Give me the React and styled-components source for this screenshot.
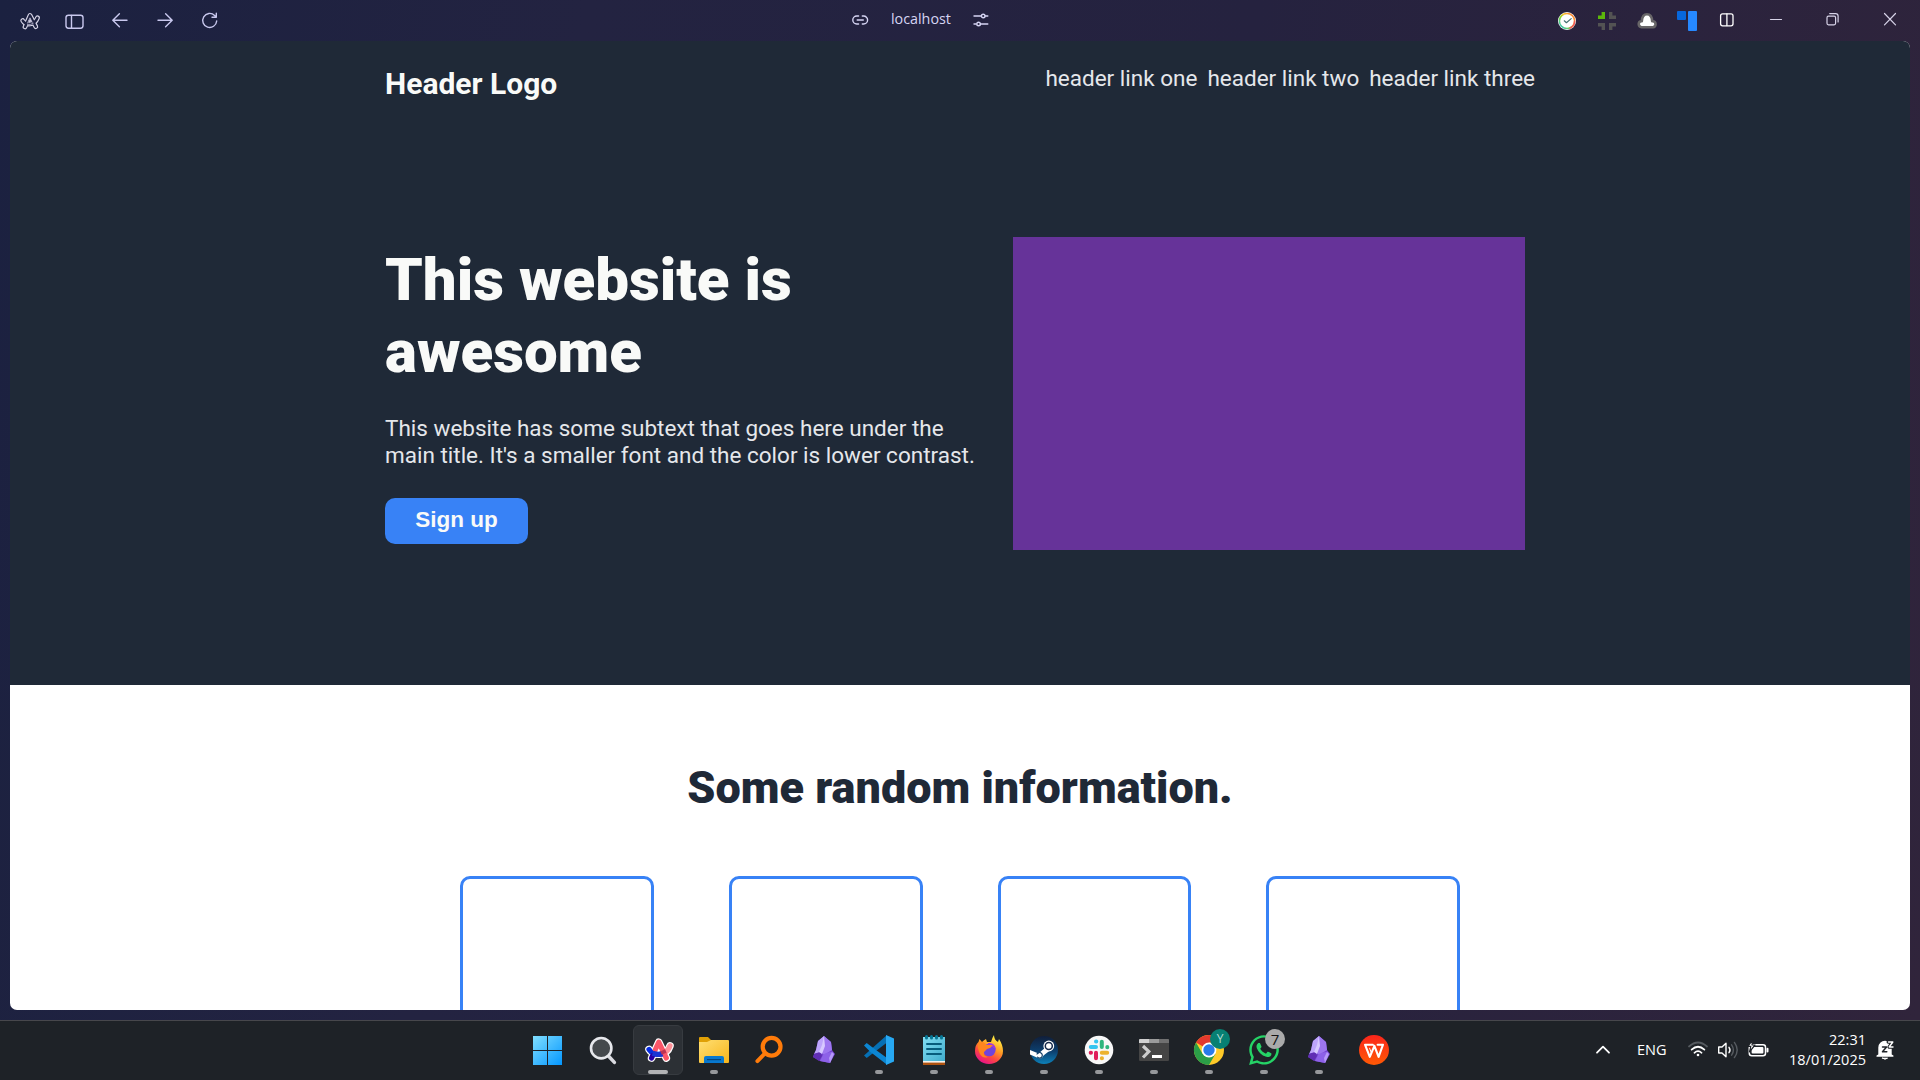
import React from "react";
import styled, { createGlobalStyle } from "styled-components";
import { FaWhatsapp } from "react-icons/fa";

const GlobalStyle = createGlobalStyle`
  * { box-sizing: border-box; }
  body { margin: 0; overflow: hidden; background: #232341; }
  h1, h2, p { margin: 0; }
`;

const Desktop = styled.div`
  width: 1920px;
  height: 1080px;
  display: flex;
  flex-direction: column;
  overflow: hidden;
`;

const BrowserWindow = styled.div`
  height: 1020px;
  display: flex;
  flex-direction: column;
  padding: 0 10px 10px;
  background: linear-gradient(100deg, #1b2140 0%, #232341 28%, #25223f 60%, #30243b 100%);
`;

const Toolbar = styled.div`
  height: 41px;
  margin: 0 -10px;
  flex: none;
  display: grid;
  grid-template-columns: 844px auto 1fr;
`;

const ToolGroup = styled.div`
  display: flex;
  height: 40px;
  justify-content: ${(p) => (p.$end ? "flex-end" : "flex-start")};
  padding: ${(p) => (p.$end ? "0 2px 0 0" : "0 0 0 7px")};
`;

const ToolButton = styled.div`
  width: ${(p) => p.$w}px;
  height: 40px;
  display: flex;
  align-items: center;
  justify-content: center;
  color: ${(p) => p.$color || "#c9c8ee"};
  svg { display: block; flex: none; }
`;

const AddressBar = styled.div`
  display: flex;
  align-items: center;
  height: 40px;
  color: #d6d5f3;
  svg { display: block; }
`;

const Host = styled.span`
  width: 61px;
  margin: 0 13px 0 15px;
  font: 400 14.3px/20px "Open Sans", "Noto Sans", sans-serif;
  padding-bottom: 2px;
  white-space: nowrap;
`;

const Page = styled.main`
  flex: 1;
  min-height: 0;
  overflow: hidden;
  border-radius: 7px;
  background: #fff;
  font-family: Roboto, sans-serif;
`;

const HeroSection = styled.section`
  height: 644px;
  background: #1f2937;
`;

const Container = styled.div`
  width: 1150px;
  margin: 0 auto;
`;

const SiteHeader = styled(Container)`
  display: flex;
  justify-content: space-between;
  align-items: flex-start;
  padding-top: 24px;
`;

const Logo = styled.div`
  padding-top: 1px;
  font-size: 30px;
  line-height: 35px;
  font-weight: 700;
  color: #f9faf8;
`;

const Links = styled.nav`
  display: flex;
  gap: 10px;
`;

const Link = styled.span`
  font-size: 22.5px;
  line-height: 26px;
  color: #e5e7eb;
`;

const HeroBody = styled(Container)`
  display: flex;
  justify-content: space-between;
  padding: 136px 10px 0 0;
`;

const HeroCopy = styled.div`
  width: 600px;
  padding-top: 7px;
`;

const HeroTitle = styled.h1`
  font-size: 60px;
  line-height: 72px;
  font-weight: 900;
  color: #f9faf8;
`;

const HeroText = styled.p`
  margin-top: 27px;
  font-size: 22.5px;
  line-height: 27px;
  color: #e5e7eb;
`;

const SignUp = styled.button`
  display: block;
  width: 143px;
  height: 46px;
  margin-top: 29px;
  padding: 0 0 2px;
  border: 0;
  border-radius: 10px;
  background: #3882f6;
  color: #f9faf8;
  font: 700 22.5px/26px "Liberation Sans", Arial, sans-serif;
`;

const HeroImage = styled.div`
  width: 512px;
  height: 313px;
  background: #663399;
`;

const InfoSection = styled.section`
  display: flex;
  flex-direction: column;
  align-items: center;
  padding-top: 76px;
`;

const InfoTitle = styled.h2`
  font-size: 45px;
  line-height: 53px;
  font-weight: 900;
  color: #1f2937;
`;

const Cards = styled.div`
  display: grid;
  grid-template-columns: repeat(4, 1fr);
  gap: 75px;
  width: 1000px;
  margin-top: 62px;
`;

const Card = styled.div`
  height: 194px;
  border: 3px solid #3882f6;
  border-radius: 10px;
`;

const Taskbar = styled.div`
  height: 60px;
  display: grid;
  grid-template-columns: 521px 881px 1fr;
  background: #1e2227;
  border-top: 1px solid #47474c;
`;

const Apps = styled.div`
  grid-column: 2;
  display: flex;
`;

const AppSlot = styled.div`
  width: 50px;
  height: 50px;
  flex: none;
  margin: 4px ${(p) => (p.$active ? 4 : 3)}px 0 2px;
  display: flex;
  flex-direction: column;
  align-items: center;
  border-radius: 6px;
  border: 1px solid ${(p) => (p.$active ? "#373b40" : "transparent")};
  background: ${(p) => (p.$active ? "#2c3035" : "transparent")};
  position: relative;
  svg { display: block; flex: none; }
`;

const AppIcon = styled.div`
  width: 40px;
  height: 40px;
  margin-top: 4px;
  display: flex;
  align-items: center;
  justify-content: center;
`;

const Indicator = styled.div`
  width: ${(p) => (p.$active ? 20 : 8)}px;
  height: 4px;
  border-radius: 2px;
  background: ${(p) => (p.$active ? "#b2b3b5" : "#96989b")};
`;

const Badge = styled.div`
  position: absolute;
  right: 3px;
  top: 3px;
  width: 20px;
  height: 20px;
  border-radius: 50%;
  background: ${(p) => p.$bg};
  color: ${(p) => p.$color};
  font: 400 ${(p) => p.$size}px/20px "Open Sans", sans-serif;
  text-align: center;
`;

const Tray = styled.div`
  display: flex;
  align-items: center;
  justify-content: flex-end;
  padding: 0 23px 1px 0;
  color: #fff;
  font: 400 14.5px/20px "Open Sans", "Noto Sans", sans-serif;
  svg { display: block; flex: none; }
`;

const Language = styled.span`
  margin: 0 19px 0 18px;
  width: 30px;
`;

const Status = styled.div`
  display: flex;
  gap: 6px;
`;

const Clock = styled.div`
  width: 80px;
  margin: 0 7px 0 16px;
  padding-bottom: 1px;
  text-align: right;
  white-space: nowrap;
`;

function Glyph({ size = 32, children, ...rest }) {
  const h = size / 2;
  return (
    <svg width={size} height={size} viewBox={`${-h} ${-h} ${size} ${size}`} fill="none" stroke="currentColor" strokeWidth="1.4" strokeLinecap="round" strokeLinejoin="round" {...rest}>
      {children}
    </svg>
  );
}

const ArcOutline = () => (
  <Glyph>
    <g strokeWidth="4.8" stroke="#d8d6e8">
      <path d="M-5 6.9L0 -4.6L5.8 6.7" /><path d="M-7.3 .6C-4.5 5.4 4.5 5.6 7.5 -2.2" />
    </g>
    <g strokeWidth="2.5" stroke="#1d2140">
      <path d="M-5 6.9L0 -4.6L5.8 6.7" /><path d="M-7.3 .6C-4.5 5.4 4.5 5.6 7.5 -2.2" />
    </g>
    <path d="M-2.4 3L0 -2.2L2.2 2.4M-2.6 4.4Q1 5 3.2 3.4M-1.3 .8L1.6 1.2" strokeWidth=".8" stroke="#c5c3dc" />
  </Glyph>
);

const SidebarIcon = () => (
  <Glyph><rect x="-9" y="-4.8" width="17" height="13" rx="2.4" /><path d="M-3.5 -4.5V7.8" /></Glyph>
);
const BackIcon = () => <Glyph><path d="M7 .3H-7M-.6 -6.2L-7.2 .3L-.6 6.8" /></Glyph>;
const ForwardIcon = () => <Glyph><path d="M-7 .3H7M.6 -6.2L7.2 .3L.6 6.8" /></Glyph>;
const ReloadIcon = () => (
  <Glyph><path d="M6.7 1A7 7 0 1 1 4.6 -4.6L6 -3.2M6.3 -6.8V-2.8H2" /></Glyph>
);
const LinkIcon = () => (
  <Glyph><path d="M-1.4 -4H-3.2A4 4 0 0 0 -3.2 4H-1.4M2.3 -4H3.6A4 4 0 0 1 3.6 4H2.3M-2.8 0H3.3" /></Glyph>
);
const SlidersIcon = () => (
  <Glyph>
    <path d="M-7 -4H.2M4.2 -4H6.8M-7 4H-5M-.6 4H6.8" />
    <circle cx="2.2" cy="-4" r="1.8" /><circle cx="-2.4" cy="4" r="1.8" />
  </Glyph>
);
const ClockExtension = () => (
  <Glyph>
    <defs>
      <linearGradient id="clk" x1="0" y1="1" x2="1" y2="0"><stop stopColor="#20bfe8" /><stop offset=".45" stopColor="#8ed51e" /><stop offset=".6" stopColor="#fbc328" /><stop offset="1" stopColor="#f4693c" /></linearGradient>
    </defs>
    <circle cx="0" cy="1" r="9" fill="#fff" stroke="none" />
    <circle cx="0" cy="1" r="7.6" stroke="url(#clk)" strokeWidth="1.5" />
    <path d="M7.6 1A7.6 7.6 0 0 1 3 8" stroke="#f05a5a" strokeWidth="1.5" />
    <path d="M-2.7 .8L-.6 2.7L4.2 -1.4" stroke="#437170" strokeWidth="1.2" />
  </Glyph>
);
const CornersExtension = () => (
  <Glyph strokeLinecap="butt" strokeLinejoin="miter" strokeWidth="3.4" stroke="#535353">
    <path d="M-9 -2.7H-3.7V-8" stroke="#5cb80a" /><path d="M9 -2.7H3.7V-8M-9 4.7H-3.7V10M9 4.7H3.7V10" />
  </Glyph>
);
const CloudExtension = () => (
  <Glyph>
    <path d="M-5.5 7.2H6A3 3 0 0 0 6.2 1.3H5.2Q4.8 -5.8 0 -5.8T-5.2 1.3H-6A3 3 0 0 0 -5.5 7.2Z" fill="#fff" stroke="#686668" strokeWidth="2.6" />
  </Glyph>
);
const PanelsExtension = () => (
  <Glyph stroke="none"><rect x="-10" y="-9" width="9" height="9" rx="1" fill="#0767dc" /><rect x="1" y="-9" width="9" height="20" rx="1" fill="#2688ff" /></Glyph>
);
const SplitIcon = () => (
  <Glyph strokeWidth="1.3"><rect x="-6.4" y="-6.2" width="12.4" height="12" rx="2" /><path d="M-.1 -6V5.6" /></Glyph>
);
const MinimizeIcon = () => <Glyph strokeWidth="1.2"><path d="M-5.5 -.5H5.5" /></Glyph>;
const RestoreIcon = () => (
  <Glyph strokeWidth="1.2"><rect x="-6" y="-3.8" width="8.6" height="8.6" rx="1.5" /><path d="M-3.3 -6.4H2.6Q5.1 -6.4 5.1 -4V2" /></Glyph>
);
const CloseIcon = () => <Glyph strokeWidth="1.2"><path d="M-5.5 -6.5L5.5 4.8M5.5 -6.5L-5.5 4.8" /></Glyph>;

const WindowsIcon = () => (
  <Glyph size={40} stroke="none">
    <defs><linearGradient id="win" gradientUnits="userSpaceOnUse" x1="-14" y1="-14" x2="14" y2="14"><stop stopColor="#7eddff" /><stop offset="1" stopColor="#0698ff" /></linearGradient></defs>
    <path d="M-15 -14H-1V0H-15ZM0 -14H14V0H0ZM-15 1H-1V15H-15ZM0 1H14V15H0Z" fill="url(#win)" />
  </Glyph>
);
const SearchIcon = () => (
  <Glyph size={40}><path d="M5.7 6.3L11.4 12.4" stroke="#dadbe0" strokeWidth="3.5" /><circle cx="-1.8" cy="-1.8" r="10.2" fill="#45494d" stroke="#e7e8ec" strokeWidth="2.6" /></Glyph>
);
const ArcIcon = () => (
  <Glyph size={40}>
    <g stroke="#fff" strokeWidth="7.6"><path d="M-6.4 8L.7 -7.8L8.3 8" /><path d="M-9 -.6C-5.5 6 8.5 6.8 12 -4.2" /></g>
    <g strokeWidth="5.2">
      <path d="M-9 -.6C-6.5 3.6 -1 5.2 4 4" stroke="#062ce0" />
      <path d="M6 3C9 1.6 11 -1 12 -4.2" stroke="#ff9199" />
      <path d="M-6.4 8L-5.4 5.7" stroke="#2800a5" />
      <path d="M-2.6 -.5L.7 -7.8L8.3 8" stroke="#fb5668" />
      <path d="M-5.4 3.2Q.5 5.2 4.4 3.7" stroke="#1a35d3" strokeLinecap="butt" />
      <path d="M4.6 .4L6.2 3.6" stroke="#bb3354" strokeLinecap="butt" />
    </g>
  </Glyph>
);
const FolderIcon = () => (
  <Glyph size={40} stroke="none">
    <defs><linearGradient id="fld" x1="0" y1="0" x2="1" y2="1"><stop stopColor="#ffdf73" /><stop offset="1" stopColor="#f7b51b" /></linearGradient></defs>
    <path d="M-15 -12Q-15 -13 -14 -13H-6L-3 -10H14V0H-15Z" fill="#e0a006" />
    <path d="M-15 -8H-7L-3 -10H14Q15 -10 15 -9V12Q15 13 14 13H-14Q-15 13 -15 12Z" fill="url(#fld)" />
    <path d="M-10 13V8Q-10 6 -8 6H8Q10 6 10 8V13Z" fill="#0878cf" /><rect x="-7" y="9" width="14" height="1.2" fill="#05467e" />
  </Glyph>
);
const FinderIcon = () => (
  <Glyph size={40} stroke="#ff7b0a" strokeWidth="4.2"><circle cx="2.6" cy="-3.2" r="8.9" /><path d="M-4.3 3.7L-11.6 11.1" strokeWidth="4" /></Glyph>
);
const ObsidianIcon = () => (
  <Glyph size={40} stroke="none">
    <path d="M0 -14L7 -8L8 0L11 4L6 13L-4 11L-11 7L-8 0L-6 -9Z" fill="#7545cf" />
    <path d="M0 -14L-6 -9L-8 0L-10 4L-3 2L0 -4Z" fill="#bda5fb" />
    <path d="M0 -14L7 -8L8 0L0 5L-2 3L0 -5Z" fill="#9d76ef" />
    <path d="M0 -14L1 -4L-2 4L-5 2L-2 -5Z" fill="#d7c9ff" />
    <path d="M-10 4Q-3 0 -2 6L-5 11L-11 7Z" fill="#602eb4" />
    <path d="M-1 5Q2 2 8 2L10 4L6 13L-4 11Z" fill="#8d61e8" /><path d="M8 2L10 4L6 13L5 8Z" fill="#b69af9" />
  </Glyph>
);
const CodeIcon = () => (
  <Glyph size={40} stroke="none">
    <path d="M-15 5.5L-12.3 8L8 -7.5V-15Z" fill="#0670b4" />
    <path d="M-15 -4.5L-12.3 -7L-9 -4.5L-2 .8L8 8V14.7L-8.5 2Z" fill="#0c86d2" />
    <path d="M7 -15L15 -11.5V11.5L7 15V-15Z" fill="#27a8f2" />
  </Glyph>
);
const NotepadIcon = () => (
  <Glyph size={40} stroke="none">
    <defs><linearGradient id="note" x1="0" y1="0" x2="1" y2="1"><stop stopColor="#83def3" /><stop offset="1" stopColor="#40adcd" /></linearGradient></defs>
    <rect x="-11" y="9" width="22" height="6" fill="#ae520f" /><rect x="-11" y="8" width="22" height="4.6" fill="#f4f1ec" />
    <rect x="-11" y="-13" width="22" height="24" fill="url(#note)" />
    <path d="M-7 -6H7M-7 -1H7M-7 4H7" stroke="#075c7c" strokeWidth="2" />
    <path d="M-7.5 -13.5V-12M-2.5 -13.5V-12M2.5 -13.5V-12M7.5 -13.5V-12" stroke="#087795" strokeWidth="3" />
  </Glyph>
);
const FirefoxIcon = () => (
  <Glyph size={40} stroke="none">
    <defs><linearGradient id="fox" gradientUnits="userSpaceOnUse" x1="9" y1="-12" x2="-5" y2="13"><stop stopColor="#fff044" /><stop offset=".4" stopColor="#ff9b24" /><stop offset=".7" stopColor="#fc4a3e" /><stop offset="1" stopColor="#ea1684" /></linearGradient></defs>
    <path d="M5 -15Q5 -10 9 -8L10 -11Q14 -5 14 1A14 13 0 0 1 -14 1Q-14 -5 -10.5 -8L-9.5 -11L-7 -8Q-5 -10 -3 -11L-2 -8L2 -8Q3 -12 5 -15Z" fill="url(#fox)" />
    <circle cx=".3" cy="0" r="6.3" fill="#7044db" /><path d="M-1 -7Q6 -8 7 0Q4 -4 -1 -4Z" fill="#9d36e0" />
    <path d="M-11 -7Q-5 -10 -3 -5L4 -5Q2 -2 -2 -1L-5 2Q-6 6 -1 7Q-6 9 -9 4Q-12 -2 -11 -7Z" fill="#ff851f" />
  </Glyph>
);
const SteamIcon = () => (
  <Glyph size={40} stroke="none">
    <defs><linearGradient id="stm" x1="0" y1="0" x2="0" y2="1"><stop stopColor="#101e3a" /><stop offset=".55" stopColor="#0c4070" /><stop offset="1" stopColor="#0d81b9" /></linearGradient></defs>
    <circle cx="0" cy="0" r="14" fill="url(#stm)" />
    <path d="M-14 0L-5.5 3.6L0 -1.2L5 -7L9.5 -3L4 2L-.5 5.5Q-2 9.5 -6 8L-14 4.5Z" fill="#fff" />
    <circle cx="4.8" cy="-4" r="5.4" fill="#fff" /><circle cx="4.8" cy="-4" r="3.5" fill="#fff" stroke="#15294a" strokeWidth="1.5" />
    <path d="M-7 4A2.8 2.8 0 1 1 -6.5 7.2" stroke="#18436a" fill="none" strokeWidth="1.2" />
  </Glyph>
);
const SlackIcon = () => (
  <Glyph size={40} strokeWidth="4">
    <circle cx="0" cy="0" r="14.3" fill="#f8f8f8" stroke="none" />
    <path d="M-8.2 -3H-3M-3 -8.5H-2.7" stroke="#36c5f0" /><path d="M2.8 -8.2V-3M8.3 -3V-2.7" stroke="#2eb67d" />
    <path d="M2.8 2.8H8.2M2.8 8.3H3" stroke="#ecb22e" /><path d="M-3 2.8V8.2M-8.3 2.8H-8" stroke="#e01e5a" />
  </Glyph>
);
const TerminalIcon = () => (
  <Glyph size={40} stroke="none">
    <rect x="-15" y="-11" width="30" height="22" rx="1.3" fill="#454545" />
    <path d="M-15 -7V-10Q-15 -11 -14 -11H-5V-7Z" fill="#cfcfcf" /><rect x="-5" y="-11" width="10" height="4" fill="#9b9b9b" /><path d="M5 -11H14Q15 -11 15 -10V-7H5Z" fill="#707070" />
    <path d="M-11 -4L-5.2 1.5L-11 7.5" fill="none" stroke="#ccc" strokeWidth="3.2" strokeLinecap="butt" strokeLinejoin="miter" /><rect x="-2" y="5" width="10" height="3" fill="#fff" />
  </Glyph>
);
const ChromeIcon = () => (
  <Glyph size={40} stroke="none">
    <circle cx="0" cy="0" r="15" fill="#ffca28" />
    <path d="M0 0L-13 -7.5A15 15 0 0 1 13 -7.5H0Z" fill="#e4392e" /><path d="M-13 -7.5A15 15 0 0 0 0 15L6.5 3.75L-6.5 3.75Z" fill="#2b9e47" />
    <circle cx="0" cy="0" r="7.4" fill="#fff" /><circle cx="0" cy="0" r="5.7" fill="#2a7bea" />
  </Glyph>
);
const WpsIcon = () => (
  <Glyph size={40}>
    <defs><linearGradient id="wps" x1="0" y1="0" x2="0" y2="1"><stop stopColor="#fb251b" /><stop offset="1" stopColor="#ff5a05" /></linearGradient></defs>
    <circle cx="0" cy="0" r="15" fill="url(#wps)" stroke="none" />
    <path d="M-1.2 -5.3H-9L-4.2 6.8L.4 -4.2L4.6 6.8L9 -5.3H3.6" stroke="#fff" strokeWidth="2.1" />
    <path d="M-4.4 -1.8L-2.6 3" stroke="#fff" strokeWidth="1" />
  </Glyph>
);

const ChevronUp = () => <Glyph strokeWidth="1.8"><path d="M-6 2.7L0 -3.3L6 2.7" /></Glyph>;
const WifiIcon = () => (
  <Glyph size={24} strokeWidth="1.7">
    <path d="M-9 -3.5Q0 -11.5 9 -3.5" stroke="#555a5f" /><path d="M-6.4 -.3Q0 -6.2 6.4 -.3M-3.6 2.8Q0 -.4 3.6 2.8" /><circle cx="0" cy="5" r="1.3" fill="#fff" stroke="none" />
  </Glyph>
);
const VolumeIcon = () => (
  <Glyph size={24} strokeWidth="1.4">
    <path d="M-9.3 -3H-6L-2 -6.8V6.8L-6 3H-9.3ZM1 -2.7Q3 0 1 2.7" /><path d="M3.6 -5.2Q7.2 0 3.6 5.2M6.4 -7.6Q12 0 6.4 7.6" stroke="#565b60" />
  </Glyph>
);
const BatteryIcon = () => (
  <Glyph size={24} strokeWidth="1.5">
    <rect x="-8.7" y="-5.3" width="16.2" height="11" rx="2.5" /><path d="M9.5 -1.2V1.5" strokeWidth="2" />
    <rect x="-6.4" y="-3" width="11.8" height="6.5" rx="1" fill="#fff" stroke="none" />
    <path d="M-5.5 -10L-10 -3.6H-7.2L-8.5 1.8L-3 -5H-6Z" fill="#fff" stroke="#1e2227" strokeWidth="1.2" />
  </Glyph>
);
const BellIcon = () => (
  <Glyph size={24}>
    <path d="M-6 4.8V-2.5A6 6 0 0 1 6 -2.5V4.8L8 6H-8Z" fill="#fff" stroke="#fff" /><path d="M-2.5 8.2H2.5Q0 10.2 -2.5 8.2Z" fill="#fff" strokeWidth="1" />
    <path d="M-2.5 -3H1.5L-2.5 1.8H1.8" stroke="#1e2227" strokeWidth="1.5" /><path d="M3.3 -8H7.8L4.2 -3H8" stroke="#1e2227" strokeWidth="3.6" /><path d="M3.5 -8H7.8L4.2 -3H8" stroke="#fff" strokeWidth="1.4" />
  </Glyph>
);

const apps = [
  { icon: <WindowsIcon /> },
  { icon: <SearchIcon /> },
  { icon: <ArcIcon />, active: true },
  { icon: <FolderIcon />, open: true },
  { icon: <FinderIcon /> },
  { icon: <ObsidianIcon /> },
  { icon: <CodeIcon />, open: true },
  { icon: <NotepadIcon />, open: true },
  { icon: <FirefoxIcon />, open: true },
  { icon: <SteamIcon />, open: true },
  { icon: <SlackIcon />, open: true },
  { icon: <TerminalIcon />, open: true },
  { icon: <ChromeIcon />, open: true, badge: { text: "Y", bg: "#078073", color: "#b5ddd8", size: 12 } },
  { icon: <FaWhatsapp size={34} color="#25d366" />, open: true, badge: { text: "7", bg: "#aaa", color: "#151515", size: 15 } },
  { icon: <ObsidianIcon />, open: true },
  { icon: <WpsIcon /> },
];

export default function App() {
  return (
    <Desktop>
      <GlobalStyle />
      <BrowserWindow>
        <Toolbar>
          <ToolGroup>
            {[ArcOutline, SidebarIcon, BackIcon, ForwardIcon, ReloadIcon].map((Icon, i) => (
              <ToolButton key={i} $w={45}><Icon /></ToolButton>
            ))}
          </ToolGroup>
          <AddressBar>
            <LinkIcon />
            <Host>localhost</Host>
            <SlidersIcon />
          </AddressBar>
          <ToolGroup $end>
            {[ClockExtension, CornersExtension, CloudExtension, PanelsExtension, SplitIcon].map((Icon, i) => (
              <ToolButton key={i} $w={40} $color="#fff"><Icon /></ToolButton>
            ))}
            {[MinimizeIcon, RestoreIcon, CloseIcon].map((Icon, i) => (
              <ToolButton key={i} $w={57} $color="#d7d3e8"><Icon /></ToolButton>
            ))}
          </ToolGroup>
        </Toolbar>
        <Page>
          <HeroSection>
            <SiteHeader>
              <Logo>Header Logo</Logo>
              <Links>
                <Link>header link one</Link>
                <Link>header link two</Link>
                <Link>header link three</Link>
              </Links>
            </SiteHeader>
            <HeroBody>
              <HeroCopy>
                <HeroTitle>This website is<br />awesome</HeroTitle>
                <HeroText>This website has some subtext that goes here under the<br />main title. It's a smaller font and the color is lower contrast.</HeroText>
                <SignUp>Sign up</SignUp>
              </HeroCopy>
              <HeroImage />
            </HeroBody>
          </HeroSection>
          <InfoSection>
            <InfoTitle>Some random information.</InfoTitle>
            <Cards>
              <Card /><Card /><Card /><Card />
            </Cards>
          </InfoSection>
        </Page>
      </BrowserWindow>
      <Taskbar>
        <Apps>
          {apps.map((app, i) => (
            <AppSlot key={i} $active={app.active}>
              <AppIcon>{app.icon}</AppIcon>
              {(app.open || app.active) && <Indicator $active={app.active} />}
              {app.badge && <Badge $bg={app.badge.bg} $color={app.badge.color} $size={app.badge.size}>{app.badge.text}</Badge>}
            </AppSlot>
          ))}
        </Apps>
        <Tray>
          <ChevronUp />
          <Language>ENG</Language>
          <Status>
            <WifiIcon />
            <VolumeIcon />
            <BatteryIcon />
          </Status>
          <Clock>22:31<br />18/01/2025</Clock>
          <BellIcon />
        </Tray>
      </Taskbar>
    </Desktop>
  );
}
